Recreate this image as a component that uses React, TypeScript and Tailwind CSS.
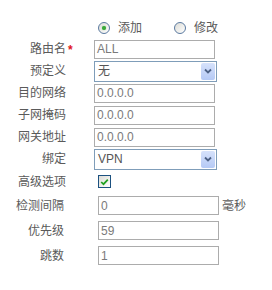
import { type FC } from "react";

const font = { fontFamily: '"Liberation Sans", "Noto Sans CJK SC", sans-serif' };

const Radio: FC<{ checked?: boolean; label: string }> = ({ checked, label }) => (
    <label className="flex items-center">
        <span className="flex h-[12px] w-[12px] items-center justify-center rounded-full border border-[#5b7aa0] bg-gradient-to-br from-[#dcdcd6] to-white">
            {checked && <span className="h-[4px] w-[4px] rounded-full bg-[#3aa83a] shadow-[0_0_1px_#5cc05c]" />}
        </span>
        <span className="ml-[8px] text-[12px] text-[#5a5a5a]">{label}</span>
    </label>
);

const TextBox: FC<{ value: string }> = ({ value }) => (
    <div className="flex h-[19px] w-[121px] items-center border border-[#acacac] bg-white pl-[2px] text-[12px] text-[#7a7a7a]">
        {value}
    </div>
);

const SelectBox: FC<{ value: string }> = ({ value }) => (
    <div className="flex h-[21px] w-[123px] items-center justify-between border border-[#7f9db9] bg-white pl-[3px] pr-[1px] text-[12px] text-[#555]">
        <span>{value}</span>
        <span className="flex h-[17px] w-[14px] items-center justify-center rounded-[2px] bg-gradient-to-b from-[#d6e2fb] to-[#b5c9f5]">
            <svg width="8" height="6" viewBox="0 0 8 6">
                <path d="M1 1.5 L4 4.5 L7 1.5" fill="none" stroke="#4d6185" strokeWidth="1.8" />
            </svg>
        </span>
    </div>
);

const Row: FC<{ label: string; req?: boolean; children: React.ReactNode }> = ({ label, req, children }) => (
    <div className="flex h-[22px] items-center">
        <div className="relative w-[66px] text-right text-[12px] text-[#5a5a5a]">
            {label}
            {req && <span className="absolute left-[68px] top-[1px] text-[12px] font-bold text-[#e0141e]">*</span>}
        </div>
        <div className="ml-[28px]">{children}</div>
    </div>
);

const LowRow: FC<{ label: string; children: React.ReactNode }> = ({ label, children }) => (
    <div className="flex h-[25px] items-center">
        <div className="w-[64px] text-right text-[12px] text-[#5a5a5a]">{label}</div>
        <div className="ml-[34px] flex items-center">{children}</div>
    </div>
);

const App: FC = () => {
    return (
        <div className="h-[290px] w-[272px] overflow-hidden bg-white leading-none" style={font}>
            <div className="mt-[17px] flex h-[21px] items-center pl-[98px]">
                <Radio checked label="添加" />
                <div className="ml-[32px]">
                    <Radio label="修改" />
                </div>
            </div>
            <Row label="路由名" req><TextBox value="ALL" /></Row>
            <Row label="预定义"><SelectBox value="无" /></Row>
            <Row label="目的网络"><TextBox value="0.0.0.0" /></Row>
            <Row label="子网掩码"><TextBox value="0.0.0.0" /></Row>
            <Row label="网关地址"><TextBox value="0.0.0.0" /></Row>
            <Row label="绑定"><SelectBox value="VPN" /></Row>
            <div className="flex h-[23px] items-center">
                <div className="w-[66px] text-right text-[12px] text-[#5a5a5a]">高级选项</div>
                <span className="ml-[32px] flex h-[13px] w-[13px] items-center justify-center border border-[#1c5180] bg-gradient-to-br from-[#dcdcd6] to-white">
                    <svg width="9" height="8" viewBox="0 0 9 8">
                        <path d="M1.2 4 L3.5 6.2 L7.8 1.6" fill="none" stroke="#21a121" strokeWidth="1.7" />
                    </svg>
                </span>
            </div>
            <LowRow label="检测间隔">
                <TextBox value="0" />
                <span className="ml-[3px] text-[12px] text-[#5a5a5a]">毫秒</span>
            </LowRow>
            <LowRow label="优先级"><TextBox value="59" /></LowRow>
            <LowRow label="跳数"><TextBox value="1" /></LowRow>
        </div>
    );
};

export default App;
